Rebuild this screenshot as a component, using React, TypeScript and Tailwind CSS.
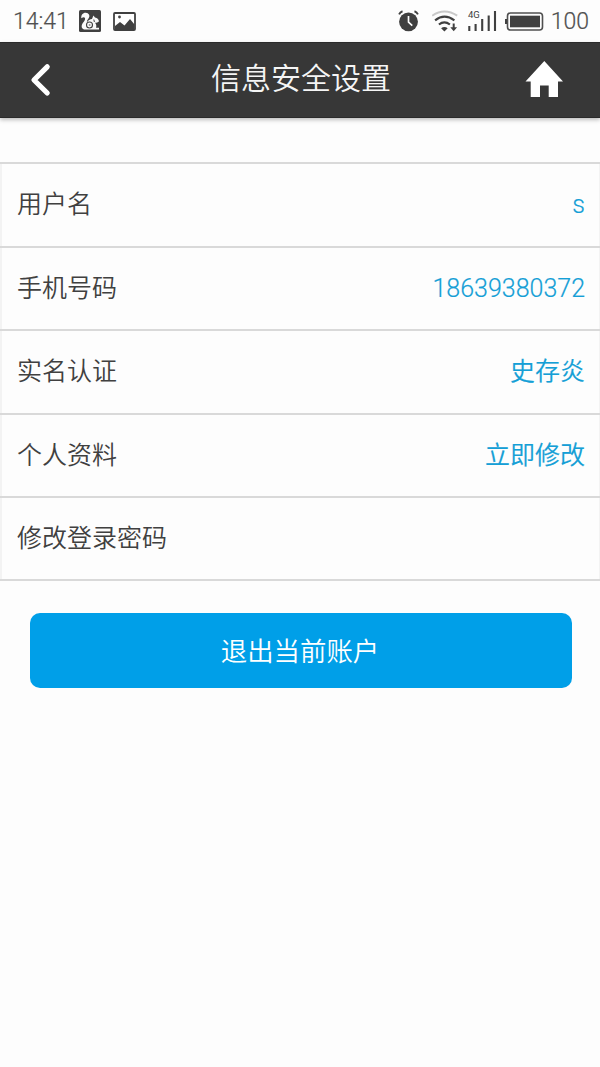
import React from 'react';

const rows = [
  { label: '用户名', value: 's' },
  { label: '手机号码', value: '18639380372' },
  { label: '实名认证', value: '史存炎' },
  { label: '个人资料', value: '立即修改' },
  { label: '修改登录密码', value: '' },
];

function StatusBar() {
  return (
    <div className="flex h-[42px] items-center justify-between bg-[#fdfdfd] pr-[11px] pl-[13px] text-[#505050]">
      <div className="flex items-center">
        <span className="w-[66px] pt-px text-[23px] leading-[42px] font-[350] whitespace-nowrap [-webkit-text-stroke:0.2px]">14:41</span>
        {/* browser notification */}
        <svg className="-mt-px" width="22" height="22" viewBox="0 0 22 22">
          <rect width="22" height="22" rx="1.5" fill="#404040" />
          <path d="M2.3 8.2C2 5 4 2.6 6.8 2.8c3 .2 4.6 3 3 5.2C8.6 9.6 7.6 11 8 12.3c1-2.2 3-3.1 5-3.3l1.4-3.4L16 7.6c2.3.5 3.6 1.8 4 3.7-1 1.2-2.4 1.5-4 1.5 1.5 1.7 1.6 3.5 1 5H20v1.8H6.5C2.5 19.5 1.7 16 3.8 13c1.4-1.8 2.7-3.3 2.2-5-.8-1-1.8-.8-3.7.2z" fill="#fafafa" />
          <circle cx="10.5" cy="15" r="3" fill="none" stroke="#404040" strokeWidth="1.1" />
          <path d="M9.8 15h1.6M14.8 9.5l.6 2.5" stroke="#404040" strokeWidth="1" />
        </svg>
        {/* screenshot notification */}
        <svg className="ml-3" width="23" height="19" viewBox="0 0 23 19">
          <rect x="1" y="1" width="21" height="17" rx="1" fill="#fff" stroke="#404040" strokeWidth="1.8" />
          <path d="M2 17v-3l5-4 4.5 3.5L17 7l4.5 5.5V17z" fill="#404040" />
          <circle cx="6.5" cy="5" r="1.4" fill="#404040" />
        </svg>
      </div>
      <div className="flex items-center">
        <svg width="21" height="22" viewBox="0 0 20 21">
          <circle cx="10" cy="11.3" r="9" fill="#404040" />
          <path d="M1 4.2Q2 2 4.3 1.2M19 4.2Q18 2 15.7 1.2" fill="none" stroke="#404040" strokeWidth="1.8" />
          <path d="M10 5.8v5.7l3.6 3.4" fill="none" stroke="#fff" strokeWidth="1.6" />
        </svg>
        <svg className="ml-[13px]" width="28" height="23" viewBox="0 0 28 23">
          <path d="M.2 5.7Q12.4 -2.5 25.2 5.7" fill="none" stroke="#c9c9c9" strokeWidth="2" />
          <path d="M3.1 10.3Q12.4 3 22.4 10.3M6.9 14.5Q12.4 10.3 17.9 14.5" fill="none" stroke="#404040" strokeWidth="2.2" />
          <path d="M9.1 18.2Q12.4 15.7 15.7 18.2L12.4 21.5z" fill="#404040" />
          <path d="M21.7 13.5v5" stroke="#404040" strokeWidth="2" />
          <path d="M18.3 17.2h6.8l-3.4 4z" fill="#404040" />
        </svg>
        <svg className="ml-[7px]" width="30" height="22" viewBox="0 0 30 22">
          <text x="1" y="8" fontFamily="Roboto, sans-serif" fontSize="9.5" fill="#404040">4G</text>
          <path d="M2.3 16v5M8.6 14v7M15.2 9v12M21.7 5.5V21M28 1v20" stroke="#404040" strokeWidth="2.1" />
        </svg>
        <svg className="ml-[8px]" width="39" height="19" viewBox="0 0 39 19">
          <rect x="2.5" y="1" width="35" height="17" rx="3" fill="none" stroke="#505050" strokeWidth="1.6" />
          <rect x="5" y="3.7" width="30" height="11.6" fill="#404040" />
          <path d="M1 7v5" stroke="#404040" strokeWidth="2" />
        </svg>
        <span className="ml-[7px] pt-px text-[23px] leading-[42px] font-[350] [-webkit-text-stroke:0.2px]">100</span>
      </div>
    </div>
  );
}

export default function App() {
  return (
    <div className="min-h-[1067px] w-full bg-[#fdfdfd] font-['Roboto','Noto_Sans_CJK_SC',sans-serif]">
      <StatusBar />

      <header className="flex h-[76px] items-center justify-between border-y border-[#2a2a2a] bg-[#373737] pr-[36px] pl-[30px] shadow-[0_2px_4px_rgba(0,0,0,0.25)]">
        <button type="button" aria-label="返回" className="w-[48px]">
          <svg width="22" height="34" viewBox="0 0 22 34">
            <path d="M17.2 3.8L4 17l13.2 13" fill="none" stroke="#fff" strokeWidth="5.2" strokeLinecap="round" strokeLinejoin="round" />
          </svg>
        </button>
        <h1 className="-mt-[3px] text-[30px] leading-[44px] font-[350] text-[#f5f5f5]">信息安全设置</h1>
        <button type="button" aria-label="首页" className="w-[40px]">
          <svg className="-mt-[2px]" width="40" height="36" viewBox="0 0 40 36">
            <path d="M20.3 0L39 20.5H34V36h-9.3V24.5H16V36H6.7V20.5H1.5z" fill="#fff" />
          </svg>
        </button>
      </header>

      <ul className="mt-[44px]">
        {rows.map((row) => (
          <li
            key={row.label}
            className="flex h-[83.6px] items-center justify-between border-t-2 border-[#d9d9d9] pr-[15px] pl-[17px] text-[25px] font-[350] shadow-[inset_2px_0_#f3f3f3,inset_-1px_0_#f3f3f3] last:h-[85px] last:border-b-2"
          >
            <span className="text-[#404040]">{row.label}</span>
            <span className="text-[#159fd6] [-webkit-text-stroke:0.2px]">{row.value}</span>
          </li>
        ))}
      </ul>

      <div className="pt-[32px] pr-[28px] pl-[30px]">
        <button type="button" className="h-[75px] w-full rounded-[10px] bg-[#009fe8] pt-[3px] pr-[2px] text-[26.4px] font-[350] text-white">
          退出当前账户
        </button>
      </div>
    </div>
  );
}
